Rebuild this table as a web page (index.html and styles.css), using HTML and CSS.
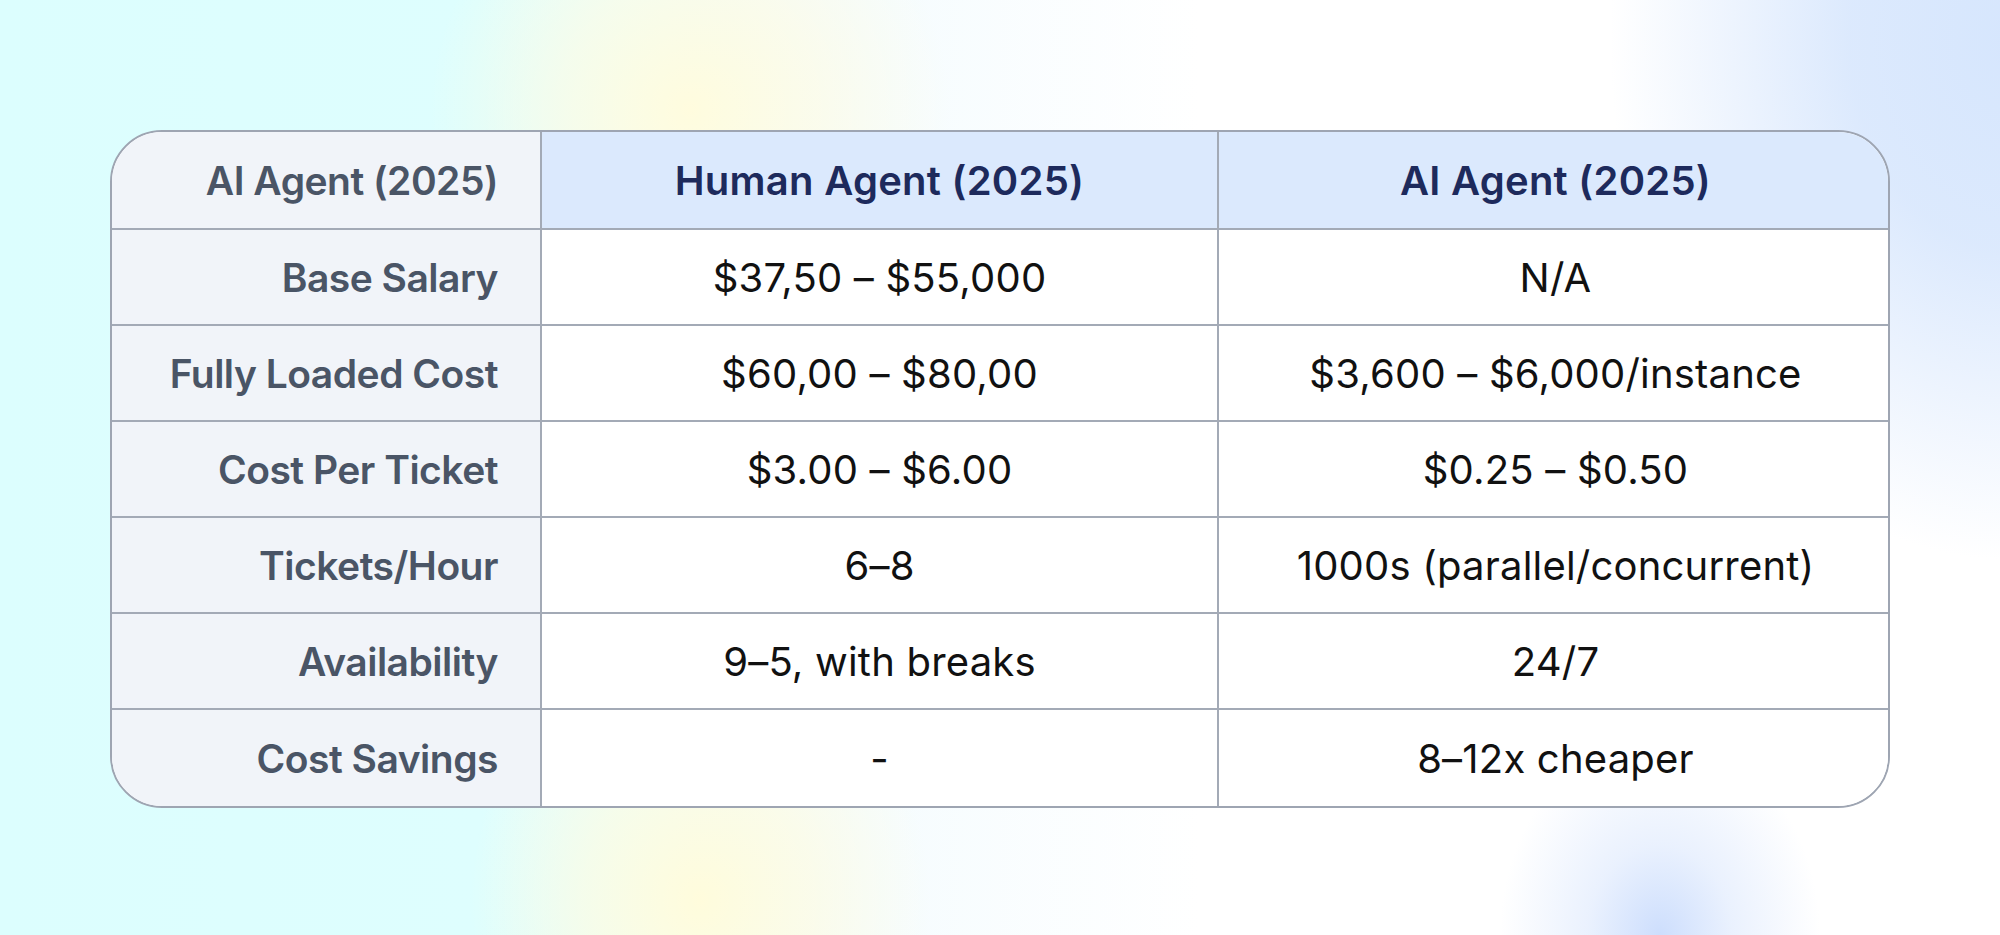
FILE: index.html
```html
<!DOCTYPE html>
<html lang="en">
<head>
<meta charset="utf-8">
<title>Human vs AI Agent Cost Comparison</title>
<link rel="stylesheet" href="styles.css">
</head>
<body>
<main class="page">
  <div class="table">
    <div class="cell label head-label">AI Agent (2025)</div>
    <div class="cell head">Human Agent (2025)</div>
    <div class="cell head last-col">AI Agent (2025)</div>

    <div class="cell label">Base Salary</div>
    <div class="cell">$37,50 – $55,000</div>
    <div class="cell last-col">N/A</div>

    <div class="cell label">Fully Loaded Cost</div>
    <div class="cell">$60,00 – $80,00</div>
    <div class="cell last-col">$3,600 – $6,000/instance</div>

    <div class="cell label">Cost Per Ticket</div>
    <div class="cell">$3.00 – $6.00</div>
    <div class="cell last-col">$0.25 – $0.50</div>

    <div class="cell label">Tickets/Hour</div>
    <div class="cell">6–8</div>
    <div class="cell last-col">1000s (parallel/concurrent)</div>

    <div class="cell label">Availability</div>
    <div class="cell">9–5, with breaks</div>
    <div class="cell last-col">24/7</div>

    <div class="cell label last-row">Cost Savings</div>
    <div class="cell last-row">-</div>
    <div class="cell last-col last-row">8–12x cheaper</div>
  </div>
</main>
</body>
</html>
```

FILE: styles.css
```css
* { box-sizing: border-box; }

html, body {
  margin: 0;
  padding: 0;
}

body {
  width: 2000px;
  height: 935px;
  overflow: hidden;
  font-family: Inter, "Noto Sans", "Liberation Sans", sans-serif;
  background-color: #ffffff;
  background-image:
    radial-gradient(ellipse 160px 200px at 1660px 935px, rgba(205, 222, 253, 1) 0%, rgba(220, 232, 253, 0.6) 45%, rgba(255, 255, 255, 0) 100%),
    radial-gradient(ellipse 400px 520px at 2010px 40px, rgba(214, 230, 253, 1) 0%, rgba(216, 231, 253, 0.9) 40%, rgba(255, 255, 255, 0) 100%),
    radial-gradient(ellipse 260px 260px at 690px 110px, rgba(255, 252, 222, 1) 0%, rgba(255, 252, 225, 0.6) 50%, rgba(255, 255, 255, 0) 100%),
    radial-gradient(ellipse 230px 260px at 700px 900px, rgba(255, 252, 220, 1) 0%, rgba(255, 252, 222, 0.6) 50%, rgba(255, 255, 255, 0) 100%),
    linear-gradient(90deg, #dcfefe 0%, #defefe 24%, #f2fbfe 38%, #ffffff 60%, #ffffff 100%);
}

.page {
  padding: 130px 0 0 110px;
}

.table {
  width: 1780px;
  display: grid;
  grid-template-columns: 430px 677px 673px;
  grid-auto-rows: 96px;
  grid-template-rows: 98px;
  border: 2px solid #9ea5b2;
  border-radius: 52px;
  overflow: hidden;
  background: #ffffff;
}

.cell {
  display: flex;
  align-items: center;
  justify-content: center;
  border-right: 2px solid #a3aab6;
  border-bottom: 2px solid #a3aab6;
  font-size: 40px;
  font-weight: 400;
  color: #111111;
  letter-spacing: 0.2px;
  background: #ffffff;
}

.label {
  justify-content: flex-end;
  padding-right: 42px;
  background: #f1f4f9;
  color: #4a5566;
  font-size: 39px;
  font-weight: 600;
  letter-spacing: -0.5px;
}

.head {
  background: #dbe9fd;
  color: #1d2a5c;
  font-weight: 600;
  letter-spacing: 0.25px;
}

.last-col { border-right: none; }
.last-row { border-bottom: none; }
```
